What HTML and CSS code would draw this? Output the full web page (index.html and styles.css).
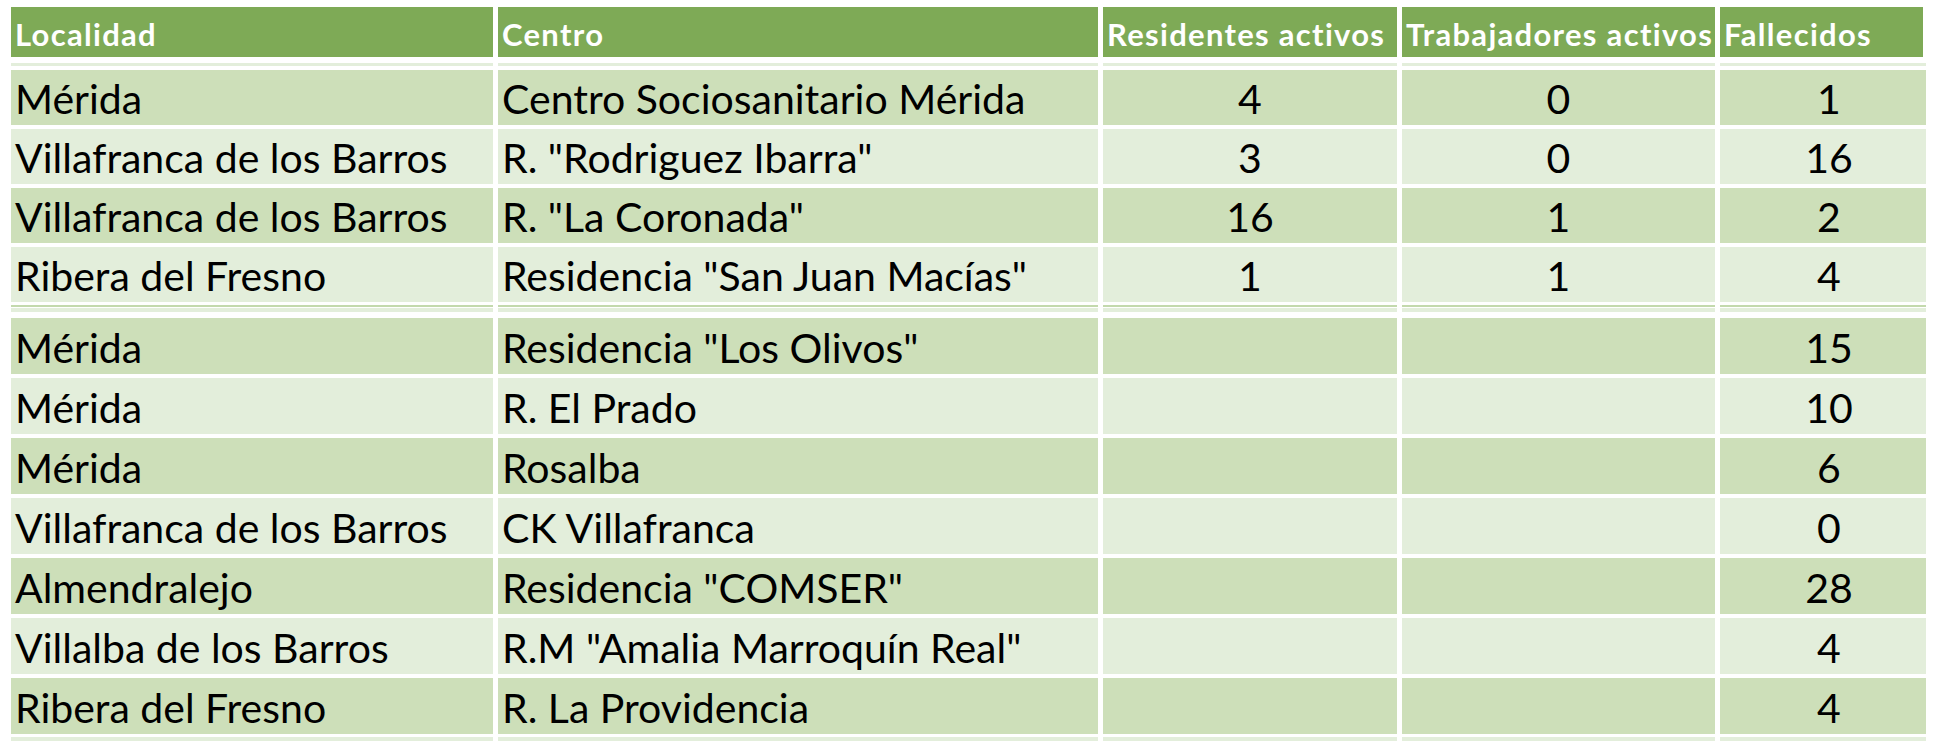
FILE: index.html
```html
<!DOCTYPE html>
<html lang="es">
<head>
<meta charset="utf-8">
<title>Residencias</title>
<link rel="stylesheet" href="styles.css">
</head>
<body>
<div class="sheet">
  <div class="row head">
    <div class="cell">Localidad</div>
    <div class="cell">Centro</div>
    <div class="cell">Residentes activos</div>
    <div class="cell">Trabajadores activos</div>
    <div class="cell">Fallecidos</div>
  </div>
  <div class="row strip top-strip">
    <div class="cell"></div><div class="cell"></div><div class="cell"></div><div class="cell"></div><div class="cell"></div>
  </div>
  <div class="group upper">
    <div class="row body dark">
      <div class="cell">Mérida</div>
      <div class="cell">Centro Sociosanitario Mérida</div>
      <div class="cell num">4</div>
      <div class="cell num">0</div>
      <div class="cell num last">1</div>
    </div>
    <div class="row body light">
      <div class="cell">Villafranca de los Barros</div>
      <div class="cell">R. "Rodriguez Ibarra"</div>
      <div class="cell num">3</div>
      <div class="cell num">0</div>
      <div class="cell num last">16</div>
    </div>
    <div class="row body dark">
      <div class="cell">Villafranca de los Barros</div>
      <div class="cell">R. "La Coronada"</div>
      <div class="cell num">16</div>
      <div class="cell num">1</div>
      <div class="cell num last">2</div>
    </div>
    <div class="row body light">
      <div class="cell">Ribera del Fresno</div>
      <div class="cell">Residencia "San Juan Macías"</div>
      <div class="cell num">1</div>
      <div class="cell num">1</div>
      <div class="cell num last">4</div>
    </div>
  </div>
  <div class="row line">
    <div class="cell"></div><div class="cell"></div><div class="cell"></div><div class="cell"></div><div class="cell"></div>
  </div>
  <div class="row strip mid-strip">
    <div class="cell"></div><div class="cell"></div><div class="cell"></div><div class="cell"></div><div class="cell"></div>
  </div>
  <div class="group lower">
    <div class="row body dark">
      <div class="cell">Mérida</div>
      <div class="cell">Residencia "Los Olivos"</div>
      <div class="cell num"></div>
      <div class="cell num"></div>
      <div class="cell num last">15</div>
    </div>
    <div class="row body light">
      <div class="cell">Mérida</div>
      <div class="cell">R. El Prado</div>
      <div class="cell num"></div>
      <div class="cell num"></div>
      <div class="cell num last">10</div>
    </div>
    <div class="row body dark">
      <div class="cell">Mérida</div>
      <div class="cell">Rosalba</div>
      <div class="cell num"></div>
      <div class="cell num"></div>
      <div class="cell num last">6</div>
    </div>
    <div class="row body light">
      <div class="cell">Villafranca de los Barros</div>
      <div class="cell">CK Villafranca</div>
      <div class="cell num"></div>
      <div class="cell num"></div>
      <div class="cell num last">0</div>
    </div>
    <div class="row body dark">
      <div class="cell">Almendralejo</div>
      <div class="cell">Residencia "COMSER"</div>
      <div class="cell num"></div>
      <div class="cell num"></div>
      <div class="cell num last">28</div>
    </div>
    <div class="row body light">
      <div class="cell">Villalba de los Barros</div>
      <div class="cell">R.M "Amalia Marroquín Real"</div>
      <div class="cell num"></div>
      <div class="cell num"></div>
      <div class="cell num last">4</div>
    </div>
    <div class="row body dark">
      <div class="cell">Ribera del Fresno</div>
      <div class="cell">R. La Providencia</div>
      <div class="cell num"></div>
      <div class="cell num"></div>
      <div class="cell num last">4</div>
    </div>
  </div>
  <div class="row strip bottom-strip">
    <div class="cell"></div><div class="cell"></div><div class="cell"></div><div class="cell"></div><div class="cell"></div>
  </div>
</div>
</body>
</html>
```

FILE: styles.css
```css
html, body {
  margin: 0;
  padding: 0;
  background: #ffffff;
}

.sheet {
  padding: 7px 0 0 11px;
  display: flex;
  flex-direction: column;
  font-family: Lato, "Liberation Sans", sans-serif;
  width: 1915px;
  height: 735px;
  overflow: hidden;
}

.row {
  display: grid;
  grid-template-columns: 482px 600px 294px 313px 206px;
  column-gap: 5px;
}

.group {
  display: flex;
  flex-direction: column;
  gap: 4px;
}

.head {
  height: 50px;
}

.head .cell {
  background: #7eaa56;
  color: #ffffff;
  font-weight: 700;
  font-size: 31px;
  line-height: 1;
  display: flex;
  align-items: flex-end;
  padding: 0 0 7px 4px;
  white-space: nowrap;
  overflow: visible;
  letter-spacing: 1.3px;
}

.head .cell:last-child {
  margin-right: 3px;
}

.top-strip {
  height: 3px;
  margin-top: 6px;
  margin-bottom: 4px;
}

.strip .cell {
  background: #e3eedb;
}

.line {
  height: 2px;
  margin-top: 3px;
}

.line .cell {
  background: #c3d9ad;
}

.mid-strip {
  height: 4px;
  margin-top: 1px;
  margin-bottom: 6px;
}

.bottom-strip {
  height: 4px;
  margin-top: 3px;
}

.upper .body {
  height: 55px;
}

.lower .body {
  height: 56px;
}

.body .cell {
  font-size: 41px;
  line-height: 1;
  color: #000000;
  display: flex;
  align-items: center;
  padding: 2px 0 0 4px;
  white-space: nowrap;
}

.dark .cell {
  background: #cddfb9;
}

.light .cell {
  background: #e3eedb;
}

.body .num {
  justify-content: center;
  padding-left: 0;
}

.body .num.last {
  padding-left: 12px;
}
```
